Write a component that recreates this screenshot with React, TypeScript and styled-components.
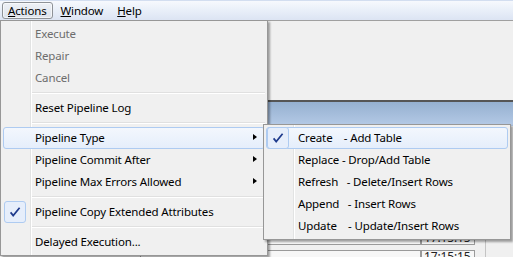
import React from "react";
import styled, { createGlobalStyle, css } from "styled-components";

const GlobalStyle = createGlobalStyle`
  html, body {
    margin: 0;
    padding: 0;
    background: #f0f0f0;
  }
  body {
    font-family: "Segoe UI", "Noto Sans", "DejaVu Sans", sans-serif;
    font-size: 11.5px;
    letter-spacing: -0.15px;
    color: #000;
  }
`;

const Screen = styled.div`
  position: relative;
  width: 513px;
  height: 257px;
  overflow: hidden;
  background: #f0f0f0;
  display: flex;
  flex-direction: column;
`;

const MenuBar = styled.div`
  height: 20px;
  flex: none;
  display: flex;
  align-items: center;
  padding-left: 2px;
  gap: 2px;
  box-sizing: border-box;
  border-top: 1px solid #d3def0;
  background: linear-gradient(#f7f9fd, #eaf0f9 45%, #dce4f3);
`;

const BarItem = styled.div<{ $open?: boolean }>`
  height: 17px;
  line-height: 15px;
  padding: 0 5px;
  box-sizing: border-box;
  border: 1px solid transparent;
  border-radius: 3px;
  ${(p) =>
    p.$open &&
    css`
      border-color: #8e9297;
      background: linear-gradient(#eef1f6, #dde3ec);
      box-shadow: inset 0 0 0 1px rgba(255, 255, 255, 0.6);
    `}
  u {
    text-decoration: underline;
    text-underline-offset: 1px;
  }
`;

const Panel = styled.div`
  height: 79px;
  flex: none;
  border-top: 1px solid #a0a0a0;
  border-bottom: 2px solid #555;
  background: #f0f0f0;
`;

const Header = styled.div`
  height: 24px;
  flex: none;
  background: linear-gradient(#95b0d0, #b5cae6);
`;

const Rows = styled.div`
  flex: 1;
  padding-top: 8px;
  display: flex;
  flex-direction: column;
`;

const Row = styled.div`
  height: 19px;
  flex: none;
  display: grid;
  grid-template-columns: 140px 281px 54px 11px 1fr;
  align-items: start;
`;

const RowLabel = styled.div`
  padding-left: 5px;
  padding-top: 5px;
  white-space: nowrap;
  overflow: hidden;
  color: #1a1a1a;
`;

const Field = styled.div`
  height: 14px;
  margin-top: 2px;
  box-sizing: border-box;
  border: 1px solid #9a9a9a;
  background: #f7f7f7;
`;

const TimeBox = styled(Field)`
  font-size: 12px;
  line-height: 12px;
  padding-left: 2px;
  color: #222;
  overflow: hidden;
`;

const ColumnRule = styled.div`
  height: 19px;
  border-right: 1px solid #c4c4c4;
`;

const Menu = styled.div<{ $left: number; $top: number; $width: number }>`
  position: absolute;
  left: ${(p) => p.$left}px;
  top: ${(p) => p.$top}px;
  width: ${(p) => p.$width}px;
  box-sizing: border-box;
  padding: 2px;
  border: 1px solid #979797;
  background-color: #f0f0f0;
  background-image: linear-gradient(
    to right,
    transparent 29px,
    #e2e3e3 29px,
    #e2e3e3 30px,
    #ffffff 30px,
    #ffffff 31px,
    transparent 31px
  );
  box-shadow: 2px 2px 2px rgba(0, 0, 0, 0.35);
  z-index: 10;
`;

const Item = styled.div<{ $disabled?: boolean; $active?: boolean }>`
  position: relative;
  height: 22px;
  line-height: 20px;
  padding-left: 31px;
  box-sizing: border-box;
  border: 1px solid transparent;
  border-radius: 3px;
  white-space: pre;
  color: ${(p) => (p.$disabled ? "#6d6d6d" : "#000")};
  ${(p) =>
    p.$active &&
    css`
      border-color: #aecbf1;
      background: linear-gradient(#f3f7fd, #e5eefb);
    `}
`;

const CheckBox = styled.span`
  position: absolute;
  left: 0;
  top: -1px;
  width: 22px;
  height: 22px;
  box-sizing: border-box;
  border: 1px solid #aecbf1;
  border-radius: 3px;
  background: #e6eefb;
  display: flex;
  align-items: center;
  justify-content: center;
`;

const Arrow = styled.span`
  position: absolute;
  right: 7px;
  top: 6px;
  width: 0;
  height: 0;
  border-top: 3.5px solid transparent;
  border-bottom: 3.5px solid transparent;
  border-left: 4px solid #000;
`;

const Separator = styled.div`
  height: 8px;
  margin-left: 29px;
  position: relative;
  &::after {
    content: "";
    position: absolute;
    left: 0;
    right: 0;
    top: 3px;
    height: 1px;
    background: #e0e0e0;
    border-bottom: 1px solid #fff;
  }
`;

const Check = () => (
  <svg width="12" height="12" viewBox="0 0 12 12">
    <path
      d="M1.6 6.4 L4.2 9.6 L10.6 1.8"
      fill="none"
      stroke="#1e3a8c"
      strokeWidth="1.7"
      strokeLinejoin="miter"
    />
  </svg>
);

type Entry =
  | { sep: true }
  | {
      sep?: false;
      label: string;
      disabled?: boolean;
      active?: boolean;
      checked?: boolean;
      sub?: boolean;
    };

const actions: Entry[] = [
  { label: "Execute", disabled: true },
  { label: "Repair", disabled: true },
  { label: "Cancel", disabled: true },
  { sep: true },
  { label: "Reset Pipeline Log" },
  { sep: true },
  { label: "Pipeline Type", active: true, sub: true },
  { label: "Pipeline Commit After", sub: true },
  { label: "Pipeline Max Errors Allowed", sub: true },
  { sep: true },
  { label: "Pipeline Copy Extended Attributes", checked: true },
  { sep: true },
  { label: "Delayed Execution..." },
];

const pipelineTypes: Entry[] = [
  { label: "Create    - Add Table", active: true, checked: true },
  { label: "Replace - Drop/Add Table" },
  { label: "Refresh   - Delete/Insert Rows" },
  { label: "Append   - Insert Rows" },
  { label: "Update    - Update/Insert Rows" },
];

const renderEntries = (entries: Entry[]) =>
  entries.map((e, i) =>
    e.sep ? (
      <Separator key={i} />
    ) : (
      <Item key={i} $disabled={e.disabled} $active={e.active}>
        {e.checked && (
          <CheckBox>
            <Check />
          </CheckBox>
        )}
        {e.label}
        {e.sub && <Arrow />}
      </Item>
    )
  );

// only the last rows peek out from under the open menus
const rowCount = 7;

const App: React.FC = () => {
  return (
    <>
      <GlobalStyle />
      <Screen>
        <MenuBar>
          <BarItem $open>
            <u>A</u>ctions
          </BarItem>
          <BarItem>
            <u>W</u>indow
          </BarItem>
          <BarItem>
            <u>H</u>elp
          </BarItem>
        </MenuBar>
        <Panel />
        <Header />
        <Rows>
          {Array.from({ length: rowCount }, (_, i) => {
            const visible = i >= rowCount - 2;
            return (
              <Row key={i}>
                <RowLabel>
                  {i === rowCount - 1 ? "Pipeline 7 : SALES_HISTORY -> DW_SALES" : ""}
                </RowLabel>
                <Field />
                <TimeBox>{visible ? "17:15:15" : ""}</TimeBox>
                <ColumnRule />
                <div />
              </Row>
            );
          })}
        </Rows>

        <Menu $left={0} $top={20} $width={268}>
          {renderEntries(actions)}
        </Menu>
        <Menu $left={263} $top={124} $width={248}>
          {renderEntries(pipelineTypes)}
        </Menu>
      </Screen>
    </>
  );
};

export default App;
